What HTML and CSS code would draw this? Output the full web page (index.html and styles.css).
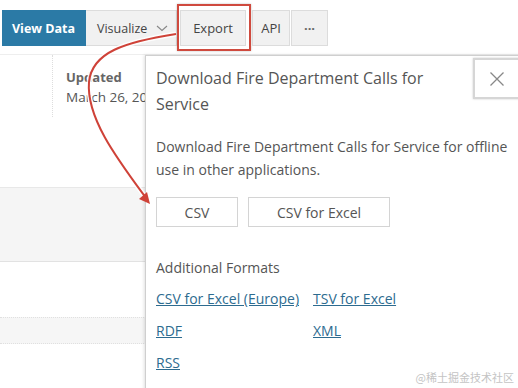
FILE: index.html
```html
<!DOCTYPE html>
<html>
<head>
<meta charset="utf-8">
<link rel="stylesheet" href="styles.css">
</head>
<body>
<div class="page">
  <div class="toolbar">
    <button class="tb-btn primary">View Data</button>
    <button class="tb-btn visualize">Visualize <svg class="chev" width="12" height="7" viewBox="0 0 12 7"><path d="M1 1 L6 5.5 L11 1" fill="none" stroke="#888" stroke-width="1.1"/></svg></button>
    <span class="highlight"><button class="tb-btn export">Export</button></span>
    <button class="tb-btn api">API</button>
    <button class="tb-btn more">&middot;&middot;&middot;</button>
  </div>

  <div class="content">
    <div class="meta-row">
      <div class="meta-blank"></div>
      <div class="meta-cell">
        <div class="meta-label">Updated</div>
        <div class="meta-value">March 26, 2019</div>
      </div>
    </div>
    <div class="band band-a"></div>
    <div class="band band-b"></div>
  </div>

  <div class="panel">
    <button class="close" aria-label="Close">
      <svg width="16" height="16" viewBox="0 0 16 16"><path d="M1.5 1.5 L14.5 14.5 M14.5 1.5 L1.5 14.5" stroke="#888" stroke-width="1.3" fill="none"/></svg>
    </button>
    <h2 class="panel-title">Download Fire Department Calls for Service</h2>
    <p class="panel-desc">Download Fire Department Calls for Service for offline use in other applications.</p>
    <div class="dl-buttons">
      <button class="dl-btn csv">CSV</button>
      <button class="dl-btn excel">CSV for Excel</button>
    </div>
    <h3 class="formats-title">Additional Formats</h3>
    <div class="formats">
      <a href="#">CSV for Excel (Europe)</a>
      <a href="#">TSV for Excel</a>
      <a href="#">RDF</a>
      <a href="#">XML</a>
      <a href="#">RSS</a>
    </div>
  </div>

  <svg class="arrow" width="518" height="388" viewBox="0 0 518 388">
    <path d="M176 34 C125 42 92 52 89 82 C86 118 118 160 146 198" fill="none" stroke="#fff" stroke-width="5" opacity="0.85"/>
    <path d="M176 34 C125 42 92 52 89 82 C86 118 118 160 146 198" fill="none" stroke="#cf4238" stroke-width="2"/>
    <path d="M150 204 L139 199 L147 192 Z" fill="#cf4238"/>
  </svg>

  <div class="watermark">@稀土掘金技术社区</div>
</div>
</body>
</html>
```

FILE: styles.css
```css
* { box-sizing: border-box; }
html, body { margin: 0; padding: 0; background: #fff; }
body {
  font-family: "Open Sans", "Noto Sans", "Noto Sans CJK SC", sans-serif;
  color: #444;
  width: 518px;
  height: 388px;
  overflow: hidden;
}
.page { position: relative; width: 518px; height: 388px; overflow: hidden; }

.toolbar {
  display: flex;
  align-items: stretch;
  height: 46px;
  padding: 10px 0 0 2px;
}
.tb-btn {
  font-family: inherit;
  font-size: 13px;
  color: #444;
  background: #f1f1f1;
  border: 1px solid #dcdcdc;
  border-left: none;
  margin: 0;
  height: 36px;
  padding: 0 12px;
  display: flex;
  align-items: center;
  white-space: nowrap;
  flex-shrink: 0;
}
.tb-btn.primary {
  background: #2b7aa6;
  border-color: #2b7aa6;
  color: #fff;
  font-weight: 700;
  font-size: 12.5px;
  width: 84px;
  padding: 0;
  justify-content: center;
}
.tb-btn.visualize { width: 91px; gap: 9px; padding: 0 0 0 11px; font-size: 12.5px; }
.chev { flex-shrink: 0; margin-top: 1px; }
.highlight {
  display: flex;
  margin: -6px -1px -5px 0;
  padding: 4px 3px 3px 1px;
  border: 2px solid #cf4a3e;
  box-shadow: 0 0 2px rgba(0,0,0,0.25);
  background: #fff;
}
.tb-btn.export { width: 66px; border-left: 1px solid #dcdcdc; justify-content: center; height: 36px; padding: 0; }
.tb-btn.api { width: 38px; justify-content: center; padding: 0; border-left: 1px solid #dcdcdc; margin-left: 2px; }
.tb-btn.more { width: 37px; justify-content: center; padding: 0; font-weight: 700; color: #666; margin-left: 1px; border-left: 1px solid #dcdcdc; }

.content { margin-top: 8px; border-top: 1px solid #eee; }
.meta-row { display: flex; height: 62px; }
.meta-blank { width: 53px; border-right: 1px dotted #ddd; }
.meta-cell { padding: 12px 0 0 13px; font-size: 13.5px; color: #555; line-height: 20px; white-space: nowrap; }
.meta-label { font-weight: 700; color: #666; font-size: 13px; }
.band-a { margin-top: 70px; height: 75px; background: #f5f5f5; border-top: 1px solid #e8e8e8; border-bottom: 1px solid #e2e2e2; }
.band-b { margin-top: 55px; height: 27px; background: #f6f6f6; border-top: 1px dotted #e0e0e0; border-bottom: 1px dotted #e0e0e0; }

.panel {
  position: absolute;
  left: 145px;
  top: 55px;
  right: -20px;
  bottom: -20px;
  background: #fff;
  border: 1px solid #cfcfcf;
  box-shadow: -1px 0 3px rgba(0,0,0,0.12);
  padding: 9px 0 0 10px;
}
.close {
  position: absolute;
  top: 2px;
  left: 327px;
  width: 60px;
  height: 41px;
  background: #fff;
  border: 2px solid #d6d6d6;
  box-shadow: 0 0 2px rgba(0,0,0,0.2);
  padding: 0 0 0 14px;
  display: flex;
  align-items: center;
}
.panel-title {
  margin: 0;
  font-size: 16px;
  font-weight: 400;
  line-height: 26px;
  color: #555;
  width: 300px;
}
.panel-desc {
  margin: 18px 0 0;
  font-size: 14px;
  line-height: 23px;
  color: #555;
  width: 360px;
}
.dl-buttons { display: flex; gap: 10px; margin-top: 16px; }
.dl-btn {
  font-family: inherit;
  font-size: 14px;
  color: #555;
  background: #fff;
  border: 1px solid #d4d4d4;
  height: 30px;
  padding: 0;
}
.dl-btn.csv { width: 82px; }
.dl-btn.excel { width: 142px; }
.formats-title {
  margin: 31px 0 0;
  font-size: 14px;
  font-weight: 400;
  color: #555;
  line-height: 20px;
}
.formats {
  display: grid;
  grid-template-columns: 157px auto;
  row-gap: 12px;
  margin-top: 11px;
  font-size: 14px;
  line-height: 20px;
}
.formats a { color: #2d6b8f; text-decoration: underline; justify-self: start; }

.arrow { position: absolute; left: 0; top: 0; pointer-events: none; }
.watermark {
  position: absolute;
  right: 4px;
  bottom: 3px;
  font-size: 11px;
  color: #c4c4c4;
  font-family: "Noto Sans CJK SC", sans-serif;
}
```
